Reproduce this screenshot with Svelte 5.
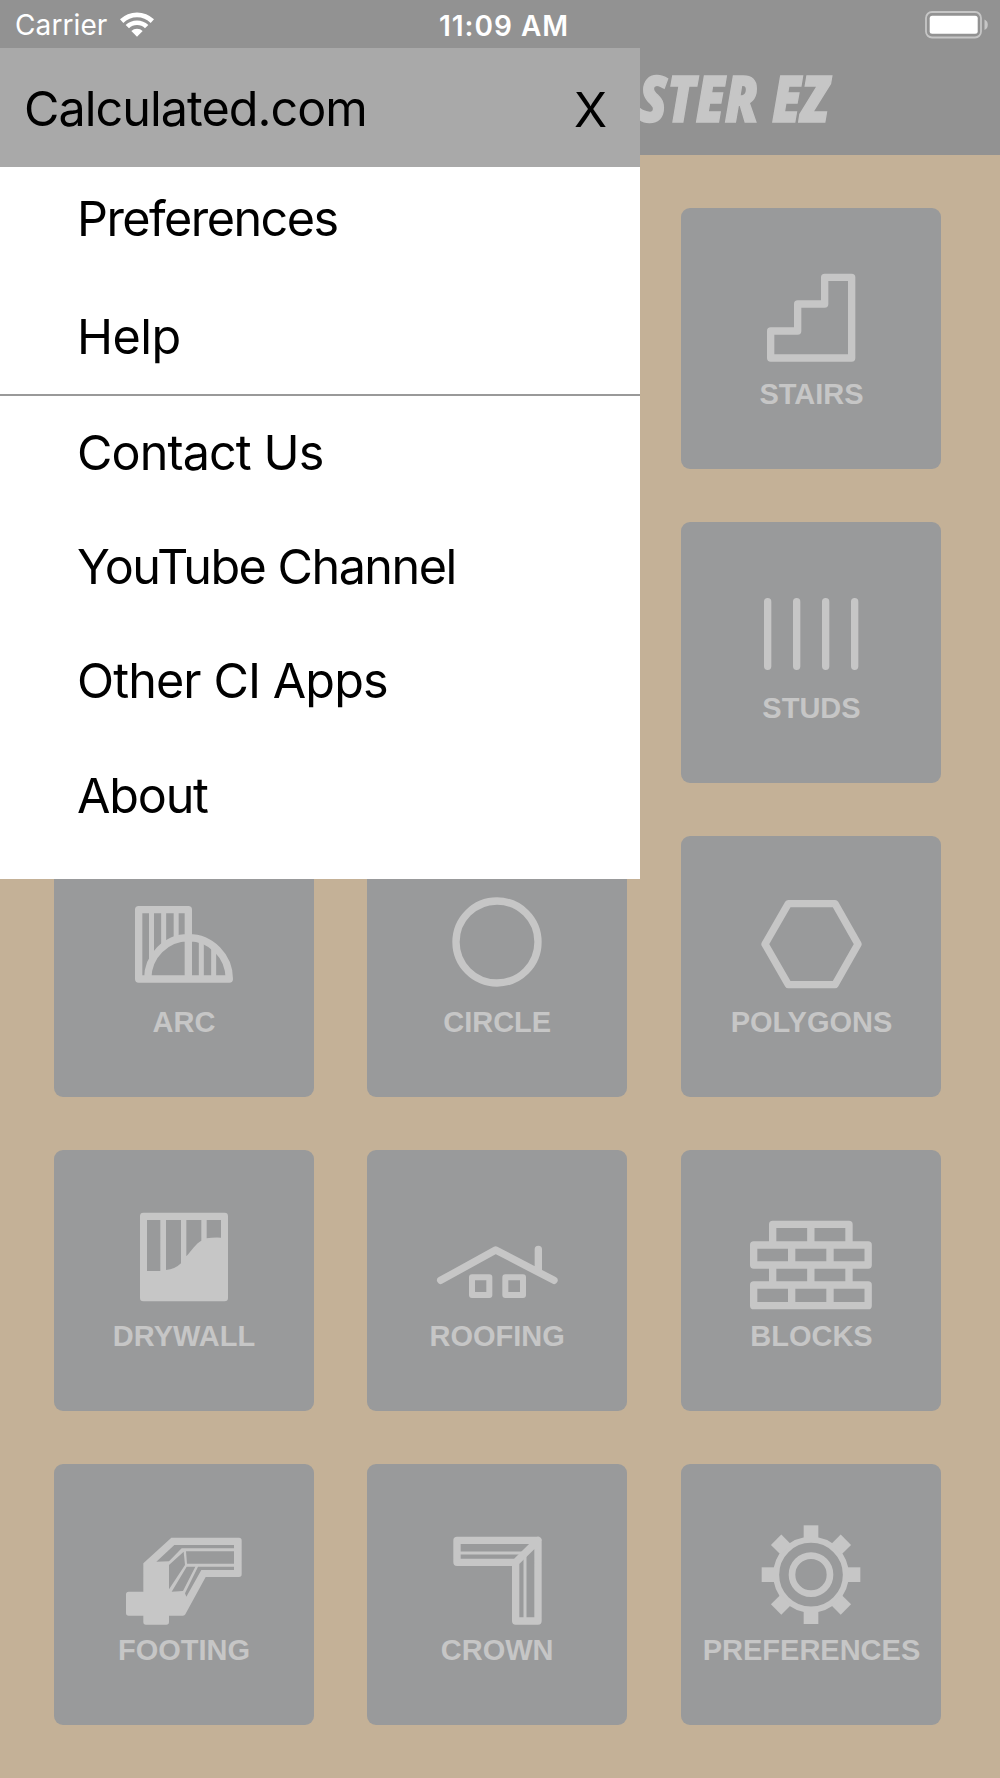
<script>
	let open = $state(true);

	const tools = [
		'walls', 'rafters', 'stairs',
		'concrete', 'fence', 'studs',
		'arc', 'circle', 'polygons',
		'drywall', 'roofing', 'blocks',
		'footing', 'crown', 'preferences'
	];

	const mainLinks = [
		{ label: 'Preferences', tracking: -1.55 },
		{ label: 'Help', tracking: -0.5 }
	];
	const moreLinks = [
		{ label: 'Contact Us', tracking: -0.9 },
		{ label: 'YouTube Channel', tracking: -1.5 },
		{ label: 'Other CI Apps', tracking: -0.9 },
		{ label: 'About', tracking: -1.2 }
	];
	const teeth = [0, 45, 90, 135, 180, 225, 270, 315];

	// the first two columns of the top rows sit behind the open menu
	const covered = ['walls', 'rafters', 'concrete', 'fence'];
</script>

<div class="screen">
	<header class="top">
		<div class="status">
			<div class="carrier">
				<span>Carrier</span>
				<svg width="34" height="25" viewBox="0 0 102 75" aria-hidden="true">
					<path d="M0 22A73 73 0 0 1 102 22L92 33A58 58 0 0 0 10 33Z" />
					<path d="M17 39A49 49 0 0 1 85 39L75 49A34 34 0 0 0 27 49Z" />
					<path d="M34 57A24 24 0 0 1 68 57L51 74Z" />
				</svg>
			</div>
			<span class="time">11:09 AM</span>
			<svg class="battery" width="64" height="28" viewBox="0 0 64 28" aria-hidden="true">
				<rect x="1" y="1" width="55" height="25.5" rx="6" fill="none" stroke="#c6c6c6" stroke-width="1.8" />
				<rect x="4.7" y="4.8" width="48" height="18" rx="2.5" fill="#fff" />
				<path d="M59.5 8.5Q62.8 10 62.8 13.7T59.5 19Z" fill="#c6c6c6" />
			</svg>
		</div>
		<div class="title"><span>STER EZ</span></div>
	</header>

	<main class="grid">
		{#each tools as tool}
			{#if covered.includes(tool)}
				<div class="tile"></div>
			{:else}
				<button type="button" class="tile">
					<svg class="icon" viewBox="0 0 780 504" aria-hidden="true">
						{#if tool === 'stairs'}
							<path class="line" d="M269 369H350V288H431V208H512V450H269Z" />
						{:else if tool === 'studs'}
							<path class="line" d="M260 239V433M347 239V433M434 239V433M521 239V433" />
						{:else if tool === 'arc'}
							<path class="line" d="M403 429V221H254V429H526A122.5 124 0 0 0 281 429" />
							<path class="line bar" d="M292.5 225V376M329 225V331M366.5 225V311M442 312V429M479 332V429" />
						{:else if tool === 'circle'}
							<circle class="line" cx="390" cy="318" r="123" />
						{:else if tool === 'polygons'}
							<path class="line" d="M322 203H462L531 324.5L462 446H322L252 324.5Z" />
						{:else if tool === 'drywall'}
							<path fill-rule="evenodd" d="M268 188H512Q522 188 522 198V444Q522 454 512 454H268Q258 454 258 444V198Q258 188 268 188ZM279 210h40v153h-40zM336 210h45v130q-18 18-45 20zM397 210h45v62c-16 8-30 30-45 47zM458 210h43v53q-25-1-43 2z" />
						{:else if tool === 'roofing'}
							<path class="line" d="M221 391L386 300L561 391M514 298V365" />
							<path class="line window" d="M315 382H367V435H315ZM415 382H468V435H415Z" />
						{:else if tool === 'blocks'}
							<path class="line" d="M275 285V223H504V285M389.5 223V285M218 285H561.5V345H218ZM332 285V345M447 285V345M275 345V405M389.5 345V405M504 345V405M218 405H561.5V467H218ZM332 405V467M447 405V467" />
						{:else if tool === 'footing'}
							<path fill-rule="evenodd" d="M268 298L352 221H555Q563 221 563 229V331Q563 339 555 339H455L394 451Q392 455 387 455H345V474Q345 482 337 482H276Q268 482 268 474V455H224Q216 455 216 447V391Q216 383 224 383H268ZM361 243H540V253H383L345 292L307 293ZM389 263L393 303L345 376V303ZM396 262H540V299H399ZM398 308H424L387 381L353 383ZM432 308H540V318H442L397 398L393 388Z" />
						{:else if tool === 'crown'}
							<path class="line" d="M270 229H513V471H446V295H270ZM513 229L446 295" />
							<path class="line thin" d="M270 267H465M474 471V275" />
						{:else}
							<circle class="line rim" cx="390" cy="332" r="104.5" />
							<circle class="line hub" cx="390" cy="332" r="57" />
							{#each teeth as angle}
								<rect x="368" y="184" width="44" height="42" transform="rotate({angle} 390 332)" />
							{/each}
						{/if}
					</svg>
					<span class="label">{tool.toUpperCase()}</span>
				</button>
			{/if}
		{/each}
	</main>

	{#if open}
		<aside class="drawer">
			<div class="drawer-head">
				<span class="site">Calculated.com</span>
				<button type="button" class="close" aria-label="Close menu" onclick={() => (open = false)}>X</button>
			</div>
			<nav>
				<ul class="main-links">
					{#each mainLinks as link}
						<li style:letter-spacing="{link.tracking}px">{link.label}</li>
					{/each}
				</ul>
				<ul class="more-links">
					{#each moreLinks as link}
						<li style:letter-spacing="{link.tracking}px">{link.label}</li>
					{/each}
				</ul>
			</nav>
		</aside>
	{/if}
</div>

<style>
	:global(body) {
		margin: 0;
	}

	.screen {
		position: relative;
		width: 1000px;
		height: 1778px;
		overflow: hidden;
		background: #c4b197;
		font-family: Inter, 'Liberation Sans', sans-serif;
	}

	.top {
		height: 154.5px;
		background: #929292;
	}

	.status {
		display: grid;
		grid-template-columns: 1fr auto 1fr;
		align-items: center;
		height: 48px;
		padding: 0 11px 0 15px;
		box-sizing: border-box;
		color: #fff;
		font-size: 28px;
		line-height: 48px;
	}

	.carrier {
		display: flex;
		align-items: center;
		gap: 13px;
		height: 50px;
		letter-spacing: 0.1px;
	}

	.carrier svg {
		fill: #fff;
		margin-bottom: 2px;
	}

	.time {
		padding: 2px 0 0 4px;
		font-weight: 600;
		letter-spacing: 1px;
	}

	.battery {
		justify-self: end;
		margin-bottom: 1px;
	}

	.title {
		display: flex;
		justify-content: flex-end;
		padding: 3px 171px 0 0;
		color: #c6c6c6;
		font-family: 'Open Sans', sans-serif;
		font-size: 64px;
		font-style: italic;
		font-weight: 800;
		line-height: 94px;
		-webkit-text-stroke: 1.5px #c6c6c6;
	}

	.title span {
		transform: scaleX(0.81);
		transform-origin: right;
	}

	.grid {
		display: grid;
		grid-template-columns: 313.2px 314.3px 260px;
		grid-auto-rows: 260.2px;
		row-gap: 53.8px;
		padding: 53.9px 54px;
	}

	.tile {
		display: flex;
		flex-direction: column;
		align-items: center;
		width: 260px;
		padding: 0;
		border: none;
		border-radius: 9px;
		background: #999a9b;
		color: #c6c6c6;
	}

	.icon {
		width: 260px;
		height: 168px;
		fill: currentColor;
	}

	.line {
		fill: none;
		stroke: currentColor;
		stroke-width: 22;
		stroke-linecap: round;
		stroke-linejoin: round;
	}

	.bar {
		stroke-width: 15;
		stroke-linecap: butt;
	}

	.window {
		stroke-width: 18;
	}

	.thin {
		stroke-width: 9;
	}

	.rim {
		stroke-width: 18;
	}

	.hub {
		stroke-width: 20;
	}

	.label {
		margin-top: 0.8px;
		font-family: 'Liberation Sans', Arial, sans-serif;
		font-size: 29px;
		font-weight: 700;
		line-height: 34px;
	}

	.drawer {
		position: absolute;
		top: 48px;
		left: 0;
		width: 640px;
		height: 831px;
		background: #fff;
		color: #000;
		font-size: 48.5px;
	}

	.drawer-head {
		display: flex;
		align-items: center;
		justify-content: space-between;
		height: 118.5px;
		padding: 0 33px 0 24px;
		box-sizing: border-box;
		background: #a9a9a9;
	}

	.site {
		padding-top: 2px;
		letter-spacing: -0.97px;
	}

	.close {
		padding: 5px 0 0;
		border: none;
		background: none;
		color: inherit;
		font: inherit;
	}

	ul {
		margin: 0;
		padding: 0;
		list-style: none;
	}

	li {
		padding-left: 77px;
		line-height: 114.4px;
	}

	.main-links {
		border-bottom: 2px solid #999;
	}

	.main-links li {
		height: 111px;
		line-height: 103px;
	}

	.main-links li + li {
		height: 116px;
		line-height: 117px;
	}
</style>
